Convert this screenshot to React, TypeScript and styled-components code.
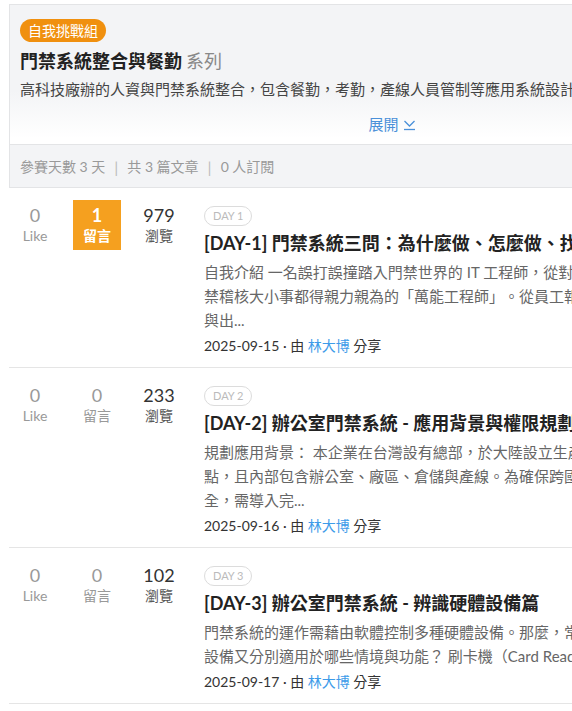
import React from 'react';
import styled, { createGlobalStyle } from 'styled-components';

const GlobalStyle = createGlobalStyle`
    html, body {
        margin: 0;
        padding: 0;
        overflow: hidden;
        background: #fff;
    }
    body {
        font-family: "Lato", "Noto Sans CJK TC", sans-serif;
        color: #333;
        text-spacing-trim: space-all;
    }
`;

const Page = styled.div`
    padding: 4px 0 0 9px;
    width: 766px;
`;

const SeriesCard = styled.div`
    border: 1px solid #e3e4e6;
    background: #f3f4f6;
`;

const SeriesTop = styled.div`
    padding: 14px 10px 9px;
    border-bottom: 1px solid #e3e4e6;
    background: linear-gradient(to bottom, #f3f4f6 0%, #f3f4f6 62%, #ffffff 96%);
`;

const Badge = styled.div`
    width: fit-content;
    height: 23px;
    line-height: 23px;
    padding: 0 8px;
    border-radius: 12px;
    background: #f0900f;
    color: #fff;
    font-size: 14px;
`;

const SeriesTitle = styled.h2`
    margin: 7px 0 0;
    font-size: 18px;
    line-height: 24px;
    font-weight: 700;
    color: #222;
    span {
        font-weight: 400;
        color: #888;
        margin-left: 4px;
    }
`;

const SeriesDesc = styled.p`
    margin: 5px 0 0;
    font-size: 15px;
    line-height: 22px;
    height: 22px;
    overflow: hidden;
    color: #444;
`;

const ExpandRow = styled.div`
    margin-top: 13px;
    display: flex;
    justify-content: center;
    a {
        display: flex;
        align-items: center;
        gap: 4px;
        font-size: 15px;
        line-height: 22px;
        color: #4a90d9;
        text-decoration: none;
    }
`;

const SeriesStats = styled.div`
    height: 42px;
    padding-left: 10px;
    display: flex;
    align-items: center;
    font-size: 14px;
    color: #999;
    .sep {
        color: #bdbdbd;
        font-size: 16px;
        margin: 0 9px;
    }
`;

const ArticleRow = styled.div`
    display: flex;
    padding: 12px 14px 9px 2px;
    border-bottom: 1px solid #e5e5e5;
`;

const StatGroup = styled.div`
    display: flex;
    gap: 14px;
    align-self: flex-start;
`;

const Stat = styled.div<{ $active?: boolean; $dark?: boolean }>`
    width: 48px;
    padding: 4px 0;
    text-align: center;
    background: ${p => (p.$active ? '#f5a01f' : 'transparent')};
    color: ${p => (p.$active ? '#fff' : p.$dark ? '#333' : '#999')};
    .num {
        font-size: 18px;
        line-height: 22px;
        font-weight: ${p => (p.$active ? 700 : 400)};
    }
    .label {
        font-size: 14px;
        line-height: 20px;
        font-weight: ${p => (p.$active ? 700 : 400)};
        color: ${p => (p.$active ? '#fff' : p.$dark ? '#555' : '#999')};
    }
`;

const ArticleBody = styled.div`
    margin-left: 21px;
    padding-top: 6px;
    width: 557px;
`;

const DayTag = styled.div`
    width: fit-content;
    height: 18px;
    line-height: 18px;
    padding: 0 8px;
    border: 1px solid #dcdcdc;
    border-radius: 10px;
    font-size: 11px;
    color: #bbb;
`;

const ArticleTitle = styled.h3`
    margin: 4px 0 0;
    font-size: 18px;
    line-height: 26px;
    font-weight: 700;
    color: #222;
    white-space: nowrap;
`;

const ArticleDesc = styled.p`
    margin: 4px 0 0;
    font-size: 15px;
    line-height: 24px;
    color: #666;
    line-break: anywhere;
`;

const Meta = styled.div`
    margin-top: 2px;
    font-size: 14px;
    line-height: 24px;
    color: #333;
    a {
        color: #3d9be9;
        text-decoration: none;
    }
`;

type Article = {
    day: number;
    title: string;
    desc: string;
    date: string;
    likes: number;
    comments: number;
    views: number;
};

const articles: Article[] = [
    {
        day: 1,
        title: '[DAY-1] 門禁系統三問：為什麼做、怎麼做、找誰做',
        desc: '自我介紹 一名誤打誤撞踏入門禁世界的 IT 工程師，從對門禁一竅不通，一路成為門禁稽核大小事都得親力親為的「萬能工程師」。從員工報到、離職、訪客到廠商的進與出...',
        date: '2025-09-15',
        likes: 0,
        comments: 1,
        views: 979,
    },
    {
        day: 2,
        title: '[DAY-2] 辦公室門禁系統 - 應用背景與權限規劃',
        desc: '規劃應用背景： 本企業在台灣設有總部，於大陸設立生產基地，並於東南亞設有據點，且內部包含辦公室、廠區、倉儲與產線。為確保跨國營運據點的人員與資產之安全，需導入完...',
        date: '2025-09-16',
        likes: 0,
        comments: 0,
        views: 233,
    },
    {
        day: 3,
        title: '[DAY-3] 辦公室門禁系統 - 辨識硬體設備篇',
        desc: '門禁系統的運作需藉由軟體控制多種硬體設備。那麼，常見的門禁硬體有哪些？這些設備又分別適用於哪些情境與功能？ 刷卡機（Card Reader）是最常見的...',
        date: '2025-09-17',
        likes: 0,
        comments: 0,
        views: 102,
    },
];

function ChevronDown() {
    return (
        <svg width="13" height="13" viewBox="0 0 13 13" fill="none" stroke="#4a90d9" strokeWidth="1.3">
            <path d="M1.5 3 L6.5 8 L11.5 3" />
            <path d="M1 11.5 H12" />
        </svg>
    );
}

function ArticleItem({ a }: { a: Article }) {
    return (
        <ArticleRow>
            <StatGroup>
                <Stat $active={a.likes > 0}>
                    <div className="num">{a.likes}</div>
                    <div className="label">Like</div>
                </Stat>
                <Stat $active={a.comments > 0}>
                    <div className="num">{a.comments}</div>
                    <div className="label">留言</div>
                </Stat>
                <Stat $dark>
                    <div className="num">{a.views}</div>
                    <div className="label">瀏覽</div>
                </Stat>
            </StatGroup>
            <ArticleBody>
                <DayTag>DAY {a.day}</DayTag>
                <ArticleTitle>{a.title}</ArticleTitle>
                <ArticleDesc>{a.desc}</ArticleDesc>
                <Meta>
                    {a.date} · 由 <a href="#">林大博</a> 分享
                </Meta>
            </ArticleBody>
        </ArticleRow>
    );
}

export default function App() {
    return (
        <>
            <GlobalStyle />
            <Page>
                <SeriesCard>
                    <SeriesTop>
                        <Badge>自我挑戰組</Badge>
                        <SeriesTitle>
                            門禁系統整合與餐勤<span>系列</span>
                        </SeriesTitle>
                        <SeriesDesc>
                            高科技廠辦的人資與門禁系統整合，包含餐勤，考勤，產線人員管制等應用系統設計與實務分享
                        </SeriesDesc>
                        <ExpandRow>
                            <a href="#">
                                展開 <ChevronDown />
                            </a>
                        </ExpandRow>
                    </SeriesTop>
                    <SeriesStats>
                        參賽天數 3 天<span className="sep">|</span>共 3 篇文章<span className="sep">|</span>0 人訂閱
                    </SeriesStats>
                </SeriesCard>
                {articles.map(a => (
                    <ArticleItem key={a.day} a={a} />
                ))}
            </Page>
        </>
    );
}
